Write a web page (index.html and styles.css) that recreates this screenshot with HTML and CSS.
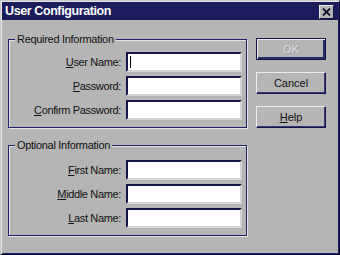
FILE: index.html
```html
<!DOCTYPE html>
<html>
<head>
<meta charset="utf-8">
<link rel="stylesheet" href="styles.css">
</head>
<body>
<div class="window">
  <div class="titlebar">
    <span class="title">User Configuration</span>
    <span class="close"><svg width="9" height="8" viewBox="0 0 9 8"><path d="M1 0.5 L8 7.5 M8 0.5 L1 7.5" stroke="#101030" stroke-width="1.8" fill="none"/></svg></span>
  </div>
  <div class="content">
    <div class="groups">
      <fieldset class="group group-required">
        <legend>Required Information</legend>
        <div class="row"><label><u>U</u>ser Name:</label><span class="input"><span class="caret"></span></span></div>
        <div class="row"><label><u>P</u>assword:</label><span class="input"></span></div>
        <div class="row"><label><u>C</u>onfirm Password:</label><span class="input"></span></div>
      </fieldset>
      <fieldset class="group group-optional">
        <legend>Optional Information</legend>
        <div class="row"><label><u>F</u>irst Name:</label><span class="input"></span></div>
        <div class="row"><label><u>M</u>iddle Name:</label><span class="input"></span></div>
        <div class="row"><label><u>L</u>ast Name:</label><span class="input"></span></div>
      </fieldset>
    </div>
    <div class="buttons">
      <div class="btn btn-default"><span class="disabled">OK</span></div>
      <div class="btn">Cancel</div>
      <div class="btn"><u>H</u>elp</div>
    </div>
  </div>
</div>
</body>
</html>
```
FILE: styles.css
```css
html, body {
  margin: 0;
  padding: 0;
  background: #b5b5b5;
}
body {
  width: 340px;
  height: 255px;
  overflow: hidden;
  font-family: "Liberation Sans", Arial, sans-serif;
  font-size: 11px;
  color: #000;
}
.window {
  box-sizing: border-box;
  width: 340px;
  height: 255px;
  background: #b5b5b5;
  border: 1px solid;
  border-color: #c8c8c8 #0a0a30 #0a0a30 #c8c8c8;
  box-shadow: inset 1px 1px 0 #e6e6e6, inset -1px -1px 0 #22226a;
  padding: 1px;
  display: flex;
  flex-direction: column;
}
.titlebar {
  height: 18px;
  background: #1c1c5c;
  display: flex;
  align-items: flex-start;
  justify-content: space-between;
}
.title {
  color: #fff;
  font-weight: bold;
  font-size: 12.5px;
  letter-spacing: -0.4px;
  line-height: 18px;
  padding-left: 3px;
}
.close {
  width: 15px;
  height: 14px;
  box-sizing: border-box;
  margin-top: 3px;
  margin-right: 4px;
  background: #b5b5b5;
  border: 1px solid;
  border-color: #e8e8e8 #101040 #101040 #e8e8e8;
  display: flex;
  align-items: center;
  justify-content: center;
}
.close svg { display: block; }
.content {
  display: flex;
  padding: 13px 0 0 6px;
}
.groups {
  display: flex;
  flex-direction: column;
  gap: 11px;
  width: 239px;
}
.group {
  box-sizing: border-box;
  width: 239px;
  min-width: 0;
  margin: 0;
  padding: 6px 4px 7px 0;
  border: 1px solid #20206a;
  box-shadow: 1px 1px 0 #e4e4e4, inset 1px 1px 0 #e4e4e4;
  display: flex;
  flex-direction: column;
  gap: 4px;
}
.group-optional {
  padding-top: 8px;
}
.group legend {
  margin-left: 6px;
  padding: 0 2px;
  background: #b5b5b5;
  line-height: 13px;
  font-size: 11px;
  letter-spacing: -0.3px;
  color: #101010;
}
.row {
  display: flex;
  align-items: center;
  gap: 5px;
  height: 20px;
}
.row label {
  width: 112px;
  text-align: right;
  letter-spacing: -0.35px;
  color: #101010;
  white-space: nowrap;
}
.input {
  box-sizing: border-box;
  width: 116px;
  height: 20px;
  background: #fff;
  border: 2px solid;
  border-color: #14144a #d6d6d6 #d6d6d6 #14144a;
  position: relative;
}
.caret {
  position: absolute;
  left: 2px;
  top: 2px;
  width: 1px;
  height: 12px;
  background: #000;
}
.buttons {
  display: flex;
  flex-direction: column;
  gap: 12px;
  margin-left: 9px;
  margin-top: 5px;
}
.btn {
  box-sizing: border-box;
  width: 70px;
  height: 22px;
  border: 1px solid;
  border-color: #ececec #14144a #14144a #ececec;
  box-shadow: inset -1px -1px 0 #3a3a7a;
  display: flex;
  align-items: center;
  justify-content: center;
  font-size: 11px;
  color: #101010;
}
.btn-default {
  border: 1px solid #14144a;
  box-shadow: inset 1px 1px 0 #ececec, inset -2px -2px 0 #2a2a6a;
}
.disabled {
  color: #dedede;
  text-shadow: 1px 1px 0 #9a9aa8;
}
u { text-decoration: underline; }
```
